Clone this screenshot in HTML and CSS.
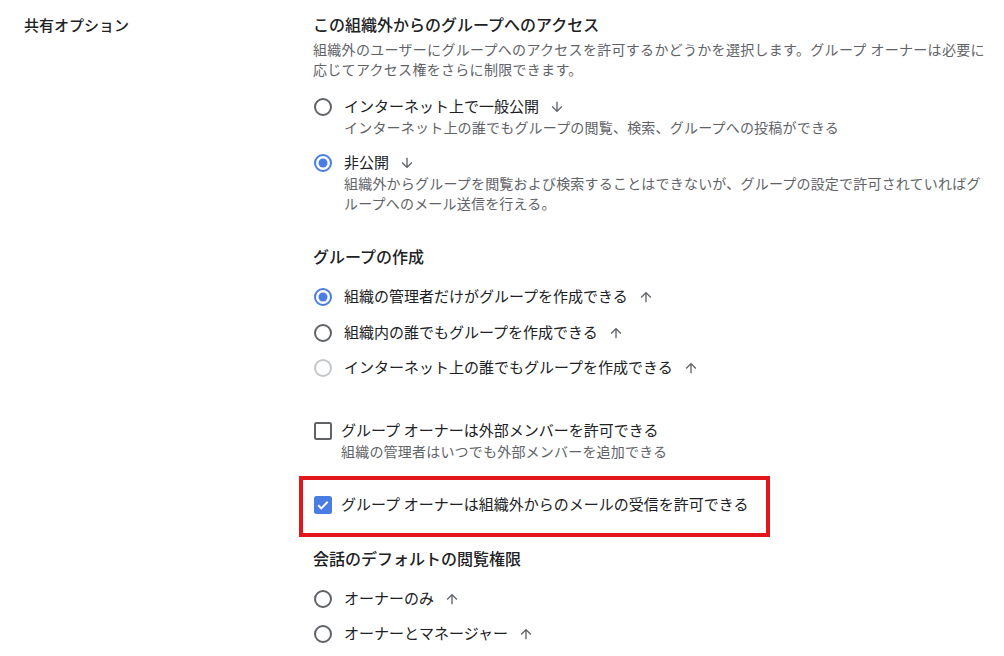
FILE: index.html
```html
<!DOCTYPE html>
<html lang="ja">
<head>
  <meta charset="UTF-8">
  <title>共有オプション</title>
  <link rel="stylesheet" href="styles.css">
</head>
<body>

<div class="settings">
  <div class="settings-label">共有オプション</div>

  <div class="settings-body">

    <section class="section">
      <h3 class="section-title">この組織外からのグループへのアクセス</h3>
      <p class="section-desc">組織外のユーザーにグループへのアクセスを許可するかどうかを選択します。グループ オーナーは必要に応じてアクセス権をさらに制限できます。</p>

      <div class="options options-loose">
        <div class="option">
          <svg class="control radio" viewBox="0 0 20 20"><circle cx="10" cy="10" r="8"/></svg>
          <div class="option-text">
            <div class="option-label">インターネット上で一般公開
              <svg class="arrow" viewBox="0 0 24 24"><path d="M20 12l-1.41-1.41L13 16.17V4h-2v12.17l-5.58-5.59L4 12l8 8 8-8z"/></svg>
            </div>
            <div class="option-hint">インターネット上の誰でもグループの閲覧、検索、グループへの投稿ができる</div>
          </div>
        </div>
        <div class="option">
          <svg class="control radio checked" viewBox="0 0 20 20"><circle cx="10" cy="10" r="8"/><circle class="dot" cx="10" cy="10" r="4.5"/></svg>
          <div class="option-text">
            <div class="option-label">非公開
              <svg class="arrow" viewBox="0 0 24 24"><path d="M20 12l-1.41-1.41L13 16.17V4h-2v12.17l-5.58-5.59L4 12l8 8 8-8z"/></svg>
            </div>
            <div class="option-hint">組織外からグループを閲覧および検索することはできないが、グループの設定で許可されていればグループへのメール送信を行える。</div>
          </div>
        </div>
      </div>
    </section>

    <section class="section section-create">
      <h3 class="section-title">グループの作成</h3>

      <div class="options">
        <div class="option">
          <svg class="control radio checked" viewBox="0 0 20 20"><circle cx="10" cy="10" r="8"/><circle class="dot" cx="10" cy="10" r="4.5"/></svg>
          <div class="option-text">
            <div class="option-label">組織の管理者だけがグループを作成できる
              <svg class="arrow" viewBox="0 0 24 24"><path d="M4 12l1.41 1.41L11 7.83V20h2V7.83l5.58 5.59L20 12l-8-8-8 8z"/></svg>
            </div>
          </div>
        </div>
        <div class="option">
          <svg class="control radio" viewBox="0 0 20 20"><circle cx="10" cy="10" r="8"/></svg>
          <div class="option-text">
            <div class="option-label">組織内の誰でもグループを作成できる
              <svg class="arrow" viewBox="0 0 24 24"><path d="M4 12l1.41 1.41L11 7.83V20h2V7.83l5.58 5.59L20 12l-8-8-8 8z"/></svg>
            </div>
          </div>
        </div>
        <div class="option">
          <svg class="control radio disabled" viewBox="0 0 20 20"><circle cx="10" cy="10" r="8"/></svg>
          <div class="option-text">
            <div class="option-label">インターネット上の誰でもグループを作成できる
              <svg class="arrow" viewBox="0 0 24 24"><path d="M4 12l1.41 1.41L11 7.83V20h2V7.83l5.58 5.59L20 12l-8-8-8 8z"/></svg>
            </div>
          </div>
        </div>
      </div>

      <div class="option option-check">
        <svg class="control checkbox" viewBox="0 0 20 20"><rect x="2" y="2" width="16" height="16" rx="1.5"/></svg>
        <div class="option-text">
          <div class="option-label">グループ オーナーは外部メンバーを許可できる</div>
          <div class="option-hint">組織の管理者はいつでも外部メンバーを追加できる</div>
        </div>
      </div>

      <div class="highlight">
        <div class="option">
          <svg class="control checkbox checked" viewBox="0 0 20 20"><rect x="1" y="1" width="18" height="18" rx="2.5"/><path class="tick" d="M5.2 10.3l3.1 3.1 6.4-6.6"/></svg>
          <div class="option-text">
            <div class="option-label">グループ オーナーは組織外からのメールの受信を許可できる</div>
          </div>
        </div>
      </div>
    </section>

    <section class="section section-view">
      <h3 class="section-title">会話のデフォルトの閲覧権限</h3>

      <div class="options options-loose">
        <div class="option">
          <svg class="control radio" viewBox="0 0 20 20"><circle cx="10" cy="10" r="8"/></svg>
          <div class="option-text">
            <div class="option-label">オーナーのみ
              <svg class="arrow" viewBox="0 0 24 24"><path d="M4 12l1.41 1.41L11 7.83V20h2V7.83l5.58 5.59L20 12l-8-8-8 8z"/></svg>
            </div>
          </div>
        </div>
        <div class="option">
          <svg class="control radio" viewBox="0 0 20 20"><circle cx="10" cy="10" r="8"/></svg>
          <div class="option-text">
            <div class="option-label">オーナーとマネージャー
              <svg class="arrow" viewBox="0 0 24 24"><path d="M4 12l1.41 1.41L11 7.83V20h2V7.83l5.58 5.59L20 12l-8-8-8 8z"/></svg>
            </div>
          </div>
        </div>
      </div>
    </section>

  </div>
</div>

</body>
</html>
```

FILE: styles.css
```css
body { margin: 0; font-family: Roboto, "Noto Sans CJK JP", sans-serif; color: #202124; background: #fff; }

.settings { display: flex; padding: 14px 14px 0 24px; }
.settings-label { width: 289px; flex-shrink: 0; font-size: 15px; font-weight: 500; line-height: 24px; }
.settings-body { flex: 1; min-width: 0; }

.section-title { margin: 0; font-size: 16px; font-weight: 500; line-height: 24px; }
.section-desc { margin: 2px 0 0; font-size: 14px; line-height: 20px; letter-spacing: 0.3px; color: #5f6368; }
.section-create { margin-top: 32px; }
.section-view { margin-top: 11px; }

.options { display: flex; flex-direction: column; gap: 15.5px; margin-top: 17px; }
.options-loose { gap: 15px; }

.option { display: flex; align-items: flex-start; }
.control { width: 20px; height: 20px; flex-shrink: 0; }
.option-text { margin-left: 11px; }
.option-label { display: flex; align-items: center; font-size: 15px; line-height: 20px; }
.option-hint { margin-top: 1px; font-size: 14px; line-height: 20px; letter-spacing: 0.2px; color: #5f6368; }

.radio circle { fill: none; stroke: #5f6368; stroke-width: 2; }
.radio.checked circle { stroke: #4a7de4; }
.radio.checked .dot { fill: #4a7de4; stroke: none; }
.radio.disabled circle { stroke: #c4c7ca; }

.checkbox rect { fill: none; stroke: #5f6368; stroke-width: 2; }
.checkbox.checked rect { fill: #4a7de4; stroke: none; }
.checkbox .tick { fill: none; stroke: #fff; stroke-width: 2; }
.option-check .option-text, .highlight .option-text { margin-left: 8px; }

.arrow { width: 16px; height: 16px; margin-left: 10px; fill: #5f6368; }

.option-check { margin-top: 43px; }
.highlight { width: fit-content; margin: 14px 0 0 -14px; padding: 15px 17px 18px 10px; border: 4px solid #e3161e; }
```
